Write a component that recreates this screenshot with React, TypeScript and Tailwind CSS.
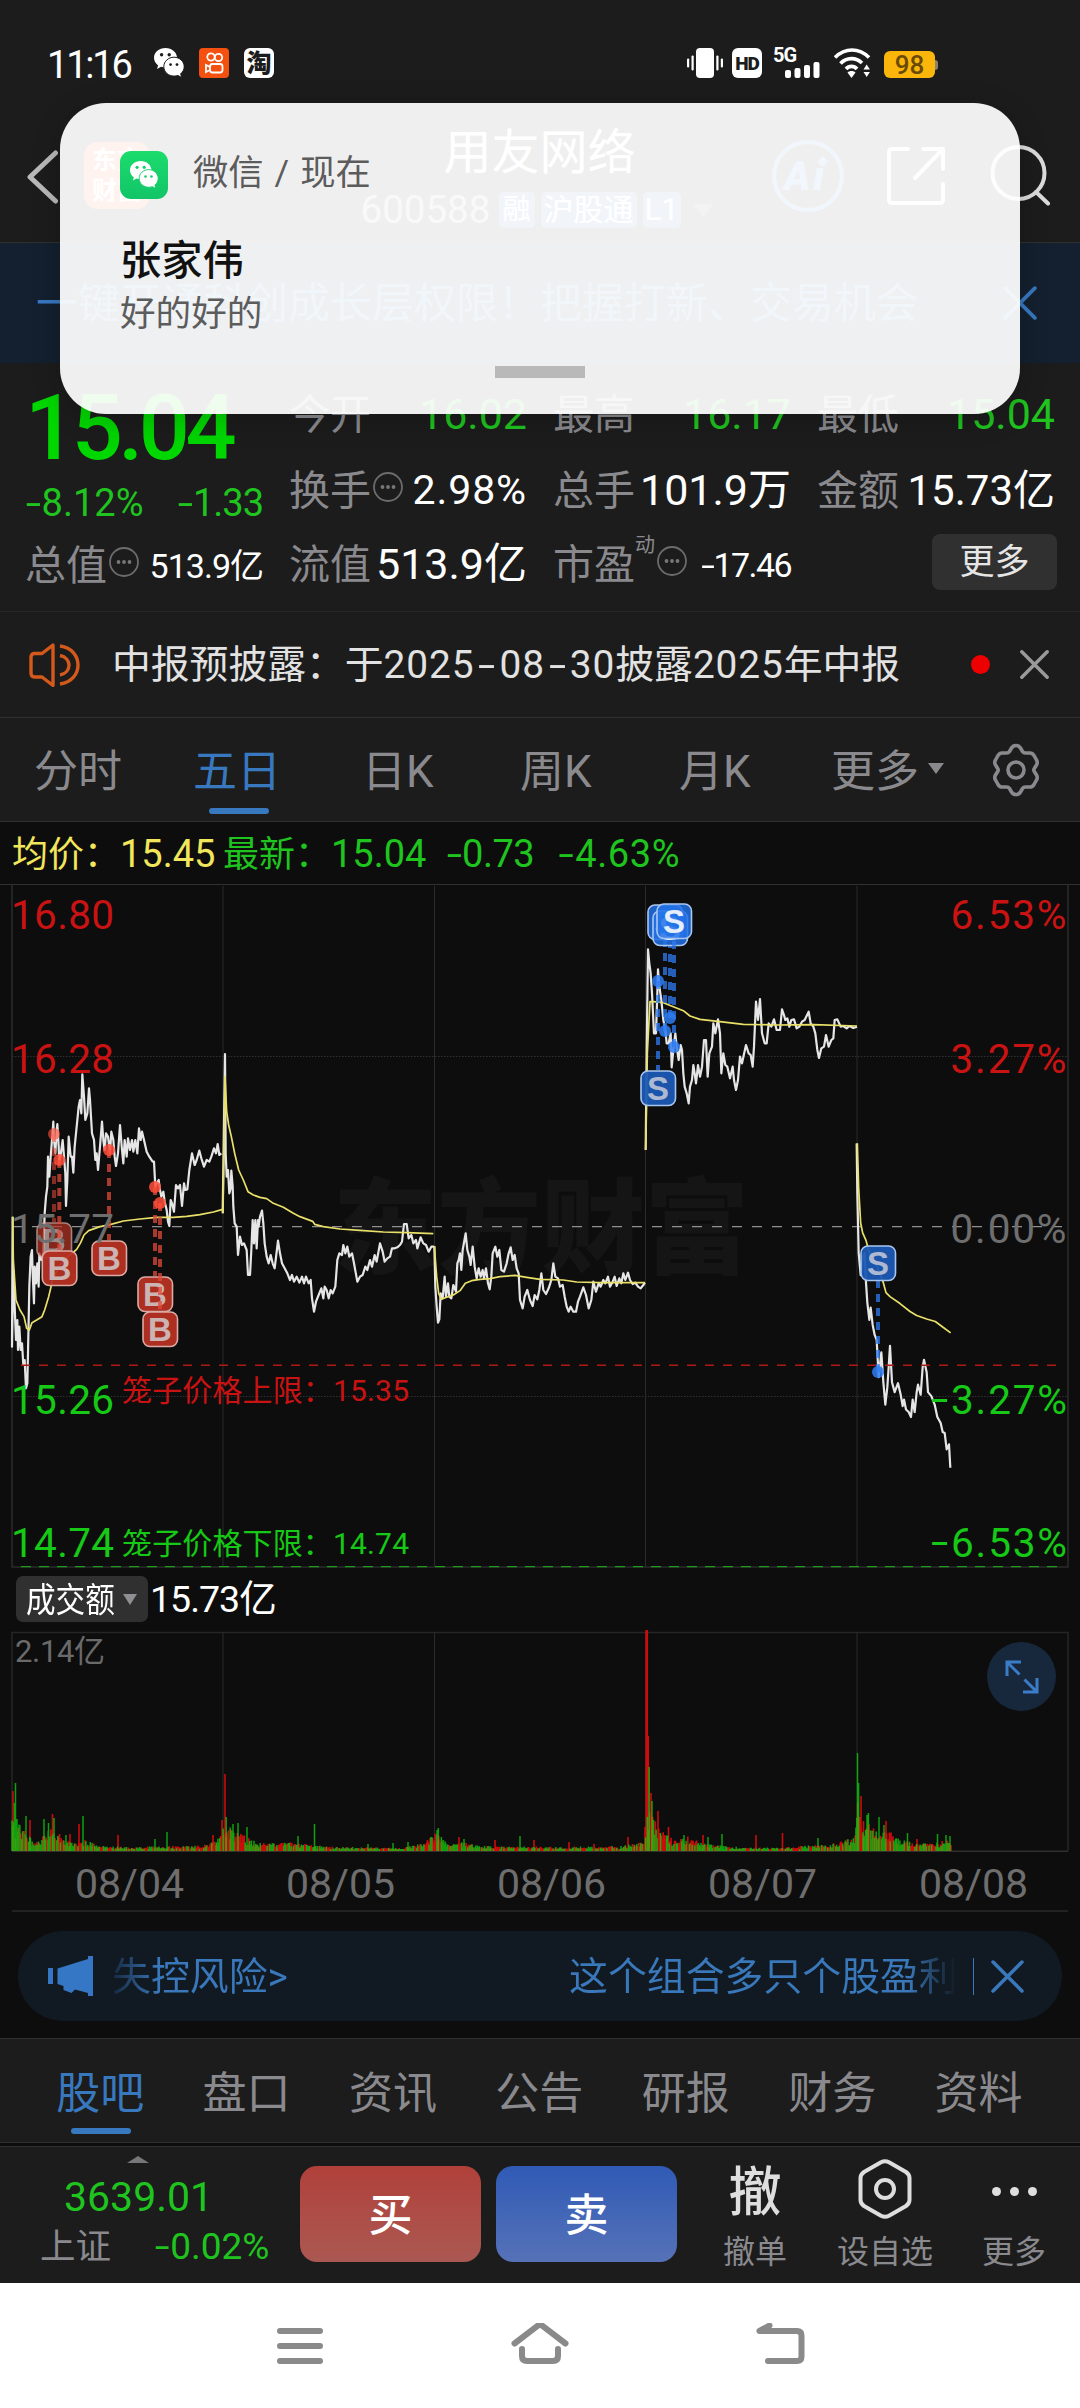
import React from "react";

const FONT = "font-[Roboto,'Noto_Sans_CJK_SC',sans-serif]";

/* ---------- small shared pieces ---------- */

function WeChat({ className, eye }: { className: string; eye: string }) {
  return (
    <svg className={className} viewBox="0 0 30 30" fill="none">
      <path d="M11.5 0C5 0 0 4.4 0 9.8c0 3.1 1.6 5.7 4.1 7.6L3 21l4.1-2.2c1.4.4 2.8.6 4.4.6 6.4 0 11.5-4.3 11.5-9.6S17.900 0 11.500 0Z" fill="#fff" />
      <circle cx="7.600" cy="6.800" r="1.700" fill={eye} />
      <circle cx="15.200" cy="6.800" r="1.700" fill={eye} />
      <path d="M20 9.200c5.600 0 10.200 4.300 10.200 9.500 0 2.900-1.400 5.300-3.500 7.100l.9 3.700-3.600-2c-1.300.4-2.600.6-4 .6-5.600 0-10.200-4.200-10.200-9.400S14.400 9.200 20 9.200Z" fill="#fff" stroke={eye} strokeWidth="1" />
      <circle cx="16.600" cy="16.600" r="1.400" fill={eye} />
      <circle cx="23" cy="16.600" r="1.400" fill={eye} />
    </svg>
  );
}

function Info() {
  return (
    <svg className="-mt-2 h-[30px] w-[30px] shrink-0" viewBox="0 0 30 30" fill="none">
      <circle cx="15" cy="15" r="14" stroke="#6c6c6e" strokeWidth="1.800" />
      <circle cx="9.500" cy="15" r="1.900" fill="#77777a" />
      <circle cx="15" cy="15" r="1.900" fill="#77777a" />
      <circle cx="20.500" cy="15" r="1.900" fill="#77777a" />
    </svg>
  );
}

function Cross({ className, width = 3.5 }: { className: string; width?: number }) {
  return (
    <svg className={className} viewBox="0 0 32 32" fill="none" stroke="currentColor" strokeWidth={width} strokeLinecap="round">
      <path d="M2 2 30 30M30 2 2 30" />
    </svg>
  );
}

/* A number whose minus sign is drawn as a wide dash. */
function Num({ children }: { children: string }) {
  if (children[0] !== "-") return <>{children}</>;
  return (
    <>
      <span className="mx-[0.08em] inline-block scale-x-[1.450]">-</span>
      {children.slice(1)}
    </>
  );
}

function DateDash() {
  return <span className="inline-block w-[25px] scale-x-[1.600] text-center tracking-normal">-</span>;
}

/* ---------- top of the screen ---------- */

function StatusBar() {
  return (
    <div className="flex h-[130px] items-center pl-[47px] text-white">
      <span className="w-[107px] text-[38px] leading-none tracking-[-2.200px]">11:16</span>
      <WeChat className="-mt-1 h-[30px] w-[30px]" eye="#1c1c1c" />
      <svg className="-mt-1 ml-[15px] h-[30px] w-[30px]" viewBox="0 0 30 30" fill="none">
        <rect width="30" height="30" rx="4" fill="#f4500f" />
        <g stroke="#fff" strokeWidth="1.800">
          <circle cx="12" cy="9" r="3.700" />
          <circle cx="19.500" cy="9.500" r="3.700" />
          <rect x="11" y="16" width="12.500" height="8.500" rx="2.500" />
          <path d="m11 19-4-2v7l4-2" />
        </g>
      </svg>
      <div className="-mt-1 ml-[15px] flex h-[30px] w-[30px] items-center justify-center rounded-[6px] bg-white text-[25px] leading-none font-black text-[#1c1c1c]">淘</div>
      <div className="-mt-1 ml-[413px] flex items-center">
        <svg className="h-[30px] w-[36px]" viewBox="0 0 36 30" fill="#fff">
          <rect x="9" y="0" width="18" height="30" rx="4" />
          <rect x="4.500" y="7.500" width="2.200" height="15" rx="1" />
          <rect x="0" y="10.500" width="2.200" height="9" rx="1" />
          <rect x="29.300" y="7.500" width="2.200" height="15" rx="1" />
          <rect x="33.800" y="10.500" width="2.200" height="9" rx="1" />
        </svg>
        <div className="ml-[9px] flex h-[30px] w-[30px] items-center justify-center rounded-[6px] bg-white text-[19px] leading-none font-black tracking-[-1px] text-[#1c1c1c]">HD</div>
        <div className="ml-[11px] flex h-[30px] w-[48px]">
          <span className="text-[20px] leading-[14px] font-bold tracking-[-1px]">5G</span>
          <svg className="-ml-[11px] h-[30px] w-[35px]" viewBox="0 0 35 30" fill="#fff">
            <rect x="0" y="22" width="6" height="8" rx="2" />
            <rect x="9.500" y="20" width="6" height="10" rx="2" />
            <rect x="19" y="17" width="6" height="13" rx="2" />
            <rect x="28.500" y="14" width="6" height="16" rx="2" />
          </svg>
        </div>
        <svg className="ml-[13px] h-[30px] w-[37px]" viewBox="0 0 37 30" fill="none" stroke="#fff" strokeWidth="3.600">
          <path d="M1 9.500C11-.5 25-.5 35 9.500" />
          <path d="M6.500 15.500c6-6.400 15.500-6.400 21.500-.5" />
          <path d="M12 21c3-3.500 8-3.500 11 0" />
          <path d="m13.500 24.500 4 5.500 4-5.500c-2-2-6-2-8 0Z" fill="#fff" stroke="none" />
          <path d="m29.500 21.500 3.200-5 3.200 5zM29.500 24l3.200 5 3.200-5z" fill="#fff" stroke="none" />
        </svg>
        <div className="ml-[13px] mt-[3px] flex h-[27px] w-[51px] items-center justify-center rounded-[6px] bg-[#fab60a] text-[26px] leading-none font-medium text-[#6b4a05]">98</div>
        <div className="mt-[3px] h-[10px] w-[3px] rounded-r bg-[#8c8467]" />
      </div>
    </div>
  );
}

function Header() {
  return (
    <div className="flex h-[113px] items-start border-b border-[#303030] pl-[27px] text-[#cfcfcf]">
      <svg className="mt-[20px] h-[54px] w-[31px] shrink-0" viewBox="0 0 31 54" fill="none" stroke="#b9b9b9" strokeWidth="5" strokeLinecap="round" strokeLinejoin="round">
        <path d="M28.500 3 3 27l25.500 24" />
      </svg>
      <div className="mt-[12px] ml-[26px] grid h-[67px] w-[66px] shrink-0 grid-cols-2 place-items-center rounded-[14px] bg-[#ff4a1c] px-[8px] py-[4px] text-[25px] leading-none font-bold text-white">
        <span>东</span><span>方</span><span>财</span><span>富</span>
      </div>
      <div className="ml-[210px] flex w-[353px] shrink-0 flex-col items-center">
        <span className="-mt-[1px] ml-[6px] text-[48px] leading-[48px] text-white">用友网络</span>
        <div className="mt-[15px] flex h-[36px] items-center">
          <span className="w-[138px] text-[38.500px] leading-none text-[#a0a0a0]">600588</span>
          <span className="w-[36px] rounded-[5px] bg-[#2f6fb5] text-center text-[28px] leading-[36px] text-white">融</span>
          <span className="ml-[6px] w-[96px] rounded-[5px] bg-[#2f6fb5] text-center text-[30px] leading-[36px] text-white">沪股通</span>
          <span className="ml-[6px] w-[38px] rounded-[5px] bg-[#2f6fb5] text-center text-[31px] leading-[36px] text-white">L1</span>
          <span className="ml-[12px] border-x-[10px] border-t-[13px] border-x-transparent border-t-[#505050]" />
        </div>
      </div>
      <svg className="mt-[10px] ml-[59px] h-[72px] w-[72px] shrink-0" viewBox="0 0 72 72" fill="none">
        <circle cx="36" cy="36" r="34" stroke="#3f86e0" strokeWidth="4" />
        <text x="12" y="50" fontSize="40" fontWeight="900" fontStyle="italic" fill="#3f86e0">A</text>
        <text x="41" y="50" fontSize="40" fontWeight="900" fontStyle="italic" fill="#3f86e0">ı</text>
        <path d="m51 16 5 5.500-5 5.500-5.500-5.500z" fill="#3f86e0" />
      </svg>
      <svg className="mt-[17px] ml-[43px] h-[58px] w-[58px] shrink-0" viewBox="0 0 58 58" fill="none" stroke="#e4e4e4" strokeWidth="4" strokeLinecap="round" strokeLinejoin="round">
        <path d="M21 2H5Q2 2 2 5v48q0 3 3 3h48q3 0 3-3V37M36 2h20v20M55 3 28 31" />
      </svg>
      <svg className="mt-[15px] ml-[45px] h-[62px] w-[60px] shrink-0" viewBox="0 0 60 62" fill="none" stroke="#dcdcdc" strokeWidth="4" strokeLinecap="round">
        <circle cx="28.500" cy="28" r="26" />
        <path d="m46 47 12 11.500" />
      </svg>
    </div>
  );
}

function Notification() {
  return (
    <div className="absolute top-[103px] left-[60px] h-[311px] w-[960px] rounded-[46px] bg-white/[0.935] shadow-[0_6px_30px_rgba(0,0,0,0.2)]">
      <div className="flex h-[92px] items-end pl-[60px]">
        <div className="-mb-[4px] flex h-[48px] w-[48px] items-center justify-center rounded-[11px] bg-gradient-to-b from-[#1bdc6c] to-[#12c468]">
          <WeChat className="h-[28px] w-[34px]" eye="#16cf6a" />
        </div>
        <span className="mb-[4px] ml-[25px] text-[35.300px] leading-[35px] text-[#5c5c5c]">微信<span className="mx-[11px]">/</span>现在</span>
      </div>
      <div className="mt-[44px] pl-[60px] text-[41.300px] leading-[44px] font-medium text-[#111]">张家伟</div>
      <div className="mt-[11px] pl-[60px] text-[35.600px] leading-[40px] text-[#5c5c5c]">好的好的</div>
      <div className="mt-[32px] ml-[435px] h-[12px] w-[90px] bg-[#b9b9b9]" />
    </div>
  );
}

function Banner() {
  return (
    <div className="flex h-[120px] items-center bg-[#14202f] pl-[36px] text-[#3878bf]">
      <span className="w-[967px] pt-[2px] text-[42px] leading-none whitespace-nowrap">一键开通科创成长层权限！把握打新、交易机会</span>
      <Cross className="h-[34px] w-[34px]" />
    </div>
  );
}

/* ---------- quote ---------- */

function Cell({ label, value, size, tone = "text-white", extra, h }: { label: string; value: string; size: string; tone?: string; extra?: React.ReactNode; h: string }) {
  return (
    <div className={`flex items-center justify-between whitespace-nowrap ${h}`}>
      <span className="flex items-center pt-[2px] text-[41px] leading-none text-[#8a8a8e]">
        {label}
        {extra}
      </span>
      <span className={`pt-[1px] leading-none ${tone} ${size}`}>
        <Num>{value}</Num>
      </span>
    </div>
  );
}

function Quote() {
  const green = "text-[#1fc41f]";
  return (
    <div className="flex h-[249px] items-start gap-[26px] border-b border-[#262626] pt-[15px] pl-[25px]">
      <div className="w-[238px]">
        <div className="flex h-[102px] items-center text-[90px] leading-none font-medium tracking-[-4.500px] text-[#00d600]">15.04</div>
        <div className="flex h-[46px] items-center justify-between text-[38px] leading-none text-[#1fc41f]">
          <span><Num>-8.12%</Num></span>
          <span className="tracking-[-1px]"><Num>-1.33</Num></span>
        </div>
        <Cell h="h-[78px]" label="总值" value="513.9亿" size="text-[34px] tracking-[-1px]" extra={<span className="ml-[2px]"><Info /></span>} />
      </div>
      <div className="w-[238px]">
        <Cell h="h-[72px]" label="今开" value="16.02" size="text-[43px]" tone={green} />
        <Cell h="h-[80px]" label="换手" value="2.98%" size="text-[41px] tracking-[0.900px]" extra={<span className="ml-[2px]"><Info /></span>} />
        <Cell h="h-[68px]" label="流值" value="513.9亿" size="text-[43px]" />
      </div>
      <div className="w-[238px]">
        <Cell h="h-[72px]" label="最高" value="16.17" size="text-[43px]" tone={green} />
        <Cell h="h-[80px]" label="总手" value="101.9万" size="text-[43px]" />
        <Cell
          h="h-[68px]"
          label="市盈"
          value="-17.46"
          size="text-[34px] tracking-[-1.600px]"
          extra={
            <>
              <span className="-mt-[40px] mr-[2px] text-[20px]">动</span>
              <Info />
            </>
          }
        />
      </div>
      <div className="w-[238px]">
        <Cell h="h-[72px]" label="最低" value="15.04" size="text-[43px]" tone={green} />
        <Cell h="h-[80px]" label="金额" value="15.73亿" size="text-[42px]" />
        <div className="flex h-[68px] items-center justify-end">
          <span className="-mt-[5px] -mr-[2px] h-[56px] w-[125px] rounded-[8px] bg-[#303030] text-center text-[35px] leading-[58px] text-[#e6e6e6]">更多</span>
        </div>
      </div>
    </div>
  );
}

function Notice() {
  return (
    <div className="flex h-[106px] items-center border-b border-[#303030] pl-[29px]">
      <svg className="h-[44px] w-[52px]" viewBox="0 0 52 44" fill="none" stroke="#d4591b" strokeWidth="3.400" strokeLinejoin="round">
        <path d="M24 2 13 10.500H5.500Q2 10.500 2 14v16q0 4 3.500 4H13l11 8.500z" />
        <path d="M31 3c24 3 24 35 0 38M31 12.500c12 2.500 12 17 0 19.500" />
      </svg>
      <span className="ml-[31px] w-[859px] pt-[2px] text-[38.800px] leading-none whitespace-nowrap text-[#e2e2e2]">
        中报预披露：于<span className="tracking-[0.900px]">2025<DateDash />08<DateDash />30</span>披露<span className="tracking-[0.900px]">2025</span>年中报
      </span>
      <span className="h-[19px] w-[19px] rounded-full bg-[#ee0000]" />
      <Cross className="ml-[30px] h-[29px] w-[29px] text-[#9a9a9a]" width={3.800} />
    </div>
  );
}

function PeriodTabs() {
  return (
    <div className="relative flex h-[104px] items-center border-b border-[#303030] pt-[5px] text-[44px] leading-none whitespace-nowrap text-[#8a8a8e]">
      <span className="ml-[34px] w-[159px]">分时</span>
      <span className="w-[169px] text-[#3878bf]">五日</span>
      <span className="w-[158px]">日K</span>
      <span className="w-[159px]">周K</span>
      <span className="w-[152px]">月K</span>
      <span>更多</span>
      <span className="ml-[9px] -mt-[8px] border-x-[8px] border-t-[11px] border-x-transparent border-t-[#8a8a8e]" />
      <svg className="-mt-[5px] ml-[46px] h-[54px] w-[52px]" viewBox="0 0 52 54" fill="none" stroke="#8a8a8e" strokeWidth="3.600" strokeLinejoin="round">
        <path d="M26 2.500q3 0 4.500 2.500l2 3.500q1 1.500 3 1.500h4.500q2.500 0 4 2.500l2.500 4.500q1.500 2.500 0 5l-2.200 3.500q-1 1.500 0 3l2.200 3.500q1.500 2.500 0 5l-2.500 4.500q-1.500 2.500-4 2.500h-4.500q-2 0-3 1.500l-2 3.500q-1.500 2.500-4.500 2.500t-4.500-2.500l-2-3.500q-1-1.500-3-1.500H12q-2.500 0-4-2.500L5.500 37q-1.500-2.500 0-5l2.200-3.500q1-1.500 0-3L5.500 22q-1.500-2.500 0-5L8 12.500q1.500-2.500 4-2.500h4.500q2 0 3-1.500l2-3.500q1.500-2.500 4.500-2.500z" />
        <circle cx="26" cy="27" r="8" />
      </svg>
      <span className="absolute bottom-[7px] left-[209px] h-[6px] w-[60px] rounded-full bg-[#3878bf]" />
    </div>
  );
}

/* ---------- price chart ---------- */

type Line = { d: string; t: string };

const SCALE_A = "translate(0 1120) scale(0.33333)";
const SCALE_B = "translate(400 820) scale(0.33333)";
const SCALE_C = "translate(750 820) scale(0.33333 0.49750)";

const PRICE: Line[] = [
  { t: SCALE_A, d: "38,290 36,680 40,450 44,560 48,660 52,600 54,690 58,620 62,690 66,670 70,735 74,720 78,805 82,790 84,700 88,500 92,410 96,390 98,460 102,550 104,440 108,490 112,430 116,500 118,400 124,420 130,400 134,280 138,230 142,200 144,110 148,170 152,110 156,60 160,5 162,60 166,100 170,30 172,12 176,80 178,130 184,90 188,60 192,110 196,160 198,258 202,180 206,50 212,110 216,110 220,158 224,80 230,20 236,-40 240,-60 244,-20 247,-137 252,-70 256,0 262,-20 267,-95 270,-60 276,40 282,60 286,120 290,100 294,150 300,80 306,5 310,60 314,90 318,40 324,50 330,100 334,35 340,60 344,110 348,138 354,100 360,15 366,90 370,130 374,60 380,110 384,55 390,90 396,60 400,95 406,60 412,100 417,25 422,60 426,35 432,60 440,95 448,110 458,125 462,125 466,200 470,190 476,180 480,210 484,230 490,215 494,245 500,270 504,305 508,318 512,240 516,250 522,275 528,195 534,205 540,195 546,258 552,190 556,210 562,208 568,150 576,100 584,135 590,120 598,92 604,115 612,140 620,120 628,125 634,110 642,85 648,100 653,72 658,105 664,100" },
  { t: SCALE_A, d: "668,280 675,-198 677,100 680,170 684,150 688,220 692,205 694,152 698,200 700,260 704,310 710,320 714,405 720,350 726,375 732,370 740,390 744,465 750,465 754,390 758,300 762,370 766,300 770,385 774,300 776,320 780,290 786,272 790,310 794,370 800,410 806,430 812,405 818,430 824,445 834,362 840,400 846,430 854,445 862,460 870,480 876,465 882,485 890,470 898,488 906,470 912,490 918,470 926,490 932,480 936,535 942,575 948,545 956,525 964,505 970,535 974,500 980,510 986,535 992,510 998,520 1006,500 1012,420 1018,400 1026,405 1030,375 1036,400 1042,380 1048,410 1056,400 1062,430 1072,485 1080,470 1088,465 1096,440 1102,450 1110,420 1116,440 1124,405 1130,425 1140,370 1148,395 1154,425 1162,415 1170,410 1176,385 1184,385 1192,382 1200,375 1206,365 1212,312 1220,312 1226,355 1234,345 1240,370 1248,360 1252,385 1262,352 1270,370 1278,375 1286,395 1294,380 1302,380" },
  { t: SCALE_B, d: "103,1278 106,1400 110,1460 114,1508 118,1498 122,1420 128,1435 134,1370 138,1430 144,1390 148,1430 154,1435 160,1395 168,1415 172,1330 176,1320 180,1300 184,1350 188,1290 197,1240 202,1290 208,1310 212,1335 218,1280 224,1340 230,1375 236,1345 242,1370 248,1350 252,1375 258,1345 264,1390 269,1408 274,1370 278,1300 286,1280 292,1310 298,1290 304,1350 312,1355 320,1330 326,1300 332,1282 338,1320 344,1305 350,1345 356,1360 360,1440 368,1465 374,1430 382,1410 390,1440 398,1458 404,1425 412,1438 418,1410 424,1360 430,1410 438,1422 446,1405 454,1380 460,1330 466,1370 474,1375 480,1400 488,1395 494,1430 500,1460 506,1475 512,1460 520,1475 528,1475 534,1445 540,1430 550,1402 558,1425 566,1465 574,1440 580,1385 588,1415 596,1390 602,1400 610,1380 616,1390 624,1370 630,1400 638,1385 644,1370 650,1398 658,1375 664,1390 670,1360 676,1380 684,1358 690,1380 698,1392 706,1388 714,1400 722,1405 730,1395 735,1388" },
  { t: SCALE_B, d: "737,990 740,700 744,388 748,430 752,460 756,520 762,640 768,640 772,520 774,448 778,500 784,540 790,600 796,630 800,670 806,670 812,640 815,742 820,690 826,640 830,680 836,720 842,675 846,690 850,760 854,800 860,820 866,850 870,800 876,780 880,735 884,760 888,790 894,735 900,770 906,740 912,660 918,660 923,770 928,700 936,680 940,610 946,640 954,598 960,640 964,760 970,700 976,735 982,740 990,775 998,740 1002,780 1008,810 1014,780 1020,710 1026,730 1038,675 1046,700 1052,705 1058,740 1062,680 1068,545 1074,600 1080,537 1086,640 1094,670 1100,670 1106,610 1114,620 1122,598 1130,630 1140,630 1146,568 1152,585 1156,600 1162,595 1168,620 1174,600 1182,598 1190,625 1198,620 1206,605 1214,600 1226,575 1232,610 1240,620 1246,640 1252,690 1257,714 1264,685 1272,680 1278,645 1286,680 1294,660 1300,655 1304,600 1312,598 1322,620 1330,618 1340,625 1348,618 1360,624 1371,620" },
  { t: SCALE_C, d: "320,650 322,750 326,870 332,915 338,880 344,870 348,930 352,970 358,1005 362,980 368,1015 374,1035 380,1045 386,1120 394,1070 400,1130 406,1175 412,1140 416,1100 420,1057 426,1130 434,1150 444,1132 452,1155 458,1178 462,1165 468,1185 476,1190 483,1200 488,1165 494,1190 500,1150 504,1135 512,1155 518,1100 522,1085 530,1110 534,1150 544,1158 554,1175 562,1200 572,1212 578,1230 584,1232 590,1265 597,1255 601,1302" },
];

const AVERAGE: Line[] = [
  { t: SCALE_A, d: "38,290 40,420 48,540 60,570 72,590 80,625 88,630 96,608 110,600 126,590 134,570 146,530 158,480 176,440 194,420 210,405 230,388 242,368 252,345 266,332 300,320 330,314 370,303 420,297 470,292 520,292 560,289 600,284 640,276 668,268" },
  { t: SCALE_A, d: "669,280 675,-130 680,-25 686,15 694,50 704,100 716,150 730,180 744,215 760,225 780,232 800,236 820,250 850,262 880,280 900,290 938,304 944,313 970,320 1020,327 1080,331 1150,336 1220,338 1300,341" },
  { t: SCALE_B, d: "103,1278 110,1370 116,1420 124,1438 140,1432 160,1425 180,1412 196,1390 215,1382 240,1378 270,1376 300,1370 345,1366 380,1372 420,1378 490,1380 530,1386 600,1388 735,1388" },
  { t: SCALE_B, d: "737,990 742,700 750,545 760,545 790,548 820,560 850,572 870,588 900,598 960,605 1030,613 1130,615 1240,614 1371,618" },
  { t: SCALE_C, d: "322,650 326,740 332,810 338,830 348,845 356,865 370,885 380,895 400,930 408,950 420,958 450,972 480,988 500,996 530,1003 556,1008 580,1020 602,1031" },
];

const DAYS = [223, 434.500, 645.500, 857];

type Mark = { x: number; dot: number; box: number; faded?: boolean };

const BUYS: Mark[] = [
  { x: 54, dot: 1134, box: 1240, faded: true },
  { x: 59.300, dot: 1160, box: 1268 },
  { x: 109, dot: 1150, box: 1258 },
  { x: 155, dot: 1187, box: 1294 },
  { x: 160, dot: 1203, box: 1329 },
];

const SELLS: Mark[] = [
  { x: 665, dot: 1031, box: 922 },
  { x: 670, dot: 1018, box: 928 },
  { x: 674, dot: 1047, box: 921 },
  { x: 658, dot: 981, box: 1088 },
  { x: 878, dot: 1372, box: 1263 },
];

function Marker({ m, letter }: { m: Mark; letter: "B" | "S" }) {
  const buy = letter === "B";
  const bright = !buy && m.box < 1000;
  return (
    <g opacity={m.faded ? 0.75 : 1}>
      <line x1={m.x} x2={m.x} y1={m.dot} y2={m.box < m.dot ? m.box + 18 : m.box - 18} stroke={buy ? "#e04a38" : "#2f7bf0"} strokeOpacity="0.75" strokeWidth="4" strokeDasharray="8 6" />
      <circle cx={m.x} cy={m.dot} r="6" fill={buy ? "#ff4d3a" : "#2e7df5"} fillOpacity="0.85" />
      <rect x={m.x - 17} y={m.box - 17} width="34.500" height="34.500" rx="7" fill={buy ? "#b53224" : bright ? "#2272e8" : "#1c5ab4"} fillOpacity={bright ? 0.85 : 0.95} stroke={buy ? "#dcaaa4" : "#a9c6f0"} strokeWidth="1.600" />
      <text x={m.x} y={m.box + 11.500} textAnchor="middle" fontSize="33" fontWeight="700" fill={buy ? "#ccb4b2" : bright ? "#e4eeff" : "#adb9d2"} className="font-['Liberation_Sans',sans-serif]">
        {letter}
      </text>
    </g>
  );
}

function PriceChart() {
  const left: [string, number, string][] = [
    ["16.80", 929, "#c91313"],
    ["16.28", 1073, "#c91313"],
    ["15.77", 1243, "#6e6e6e"],
    ["15.26", 1414, "#16c916"],
    ["14.74", 1557, "#16c916"],
  ];
  const right: [string, number, string][] = [
    ["6.53%", 929, "#c91313"],
    ["3.27%", 1073, "#c91313"],
    ["0.00%", 1243, "#6e6e6e"],
    ["-3.27%", 1414, "#16c916"],
    ["-6.53%", 1557, "#16c916"],
  ];
  return (
    <svg className="block h-[683px] w-[1080px]" viewBox="0 885 1080 683" fill="none">
      <text x="333" y="1266" fontSize="104" fontWeight="900" fill="#151515">东方财富</text>
      <g stroke="#2b2b2b">
        <path d="M12 885V1567H1068V885" strokeWidth="1.600" />
        {DAYS.map((x) => (
          <line key={x} x1={x} x2={x} y1="886" y2="1567" />
        ))}
        <path d="M12 1056.500H1068M12 1396.500H1068" stroke="#303030" strokeDasharray="1.500 1.500" />
      </g>
      <path d="M12 1226.700H1062" stroke="#8f8f8f" strokeWidth="1.300" strokeDasharray="10 10" />
      {PRICE.map((l, i) => (
        <polyline key={i} points={l.d} transform={l.t} stroke="#e6e6e6" strokeWidth="2.200" vectorEffect="non-scaling-stroke" strokeLinejoin="round" />
      ))}
      {AVERAGE.map((l, i) => (
        <polyline key={i} points={l.d} transform={l.t} stroke="#e9e06a" strokeWidth="1.700" vectorEffect="non-scaling-stroke" strokeLinejoin="round" />
      ))}
      <path d="M21 1365.300H1058" stroke="#b01818" strokeWidth="1.400" strokeDasharray="9 9" />
      <path d="M21 1566.600H1058" stroke="#1f9a1f" strokeWidth="1.400" strokeDasharray="10 8" />
      {BUYS.map((m) => <Marker key={m.x} m={m} letter="B" />)}
      {SELLS.map((m) => <Marker key={m.x} m={m} letter="S" />)}
      {left.map(([t, y, c]) => (
        <text key={t} x="11" y={y} fontSize="40.500" fill={c} textLength="103">{t}</text>
      ))}
      {right.map(([t, y, c]) => (
        <text key={t} x={t[0] === "-" ? 951 : 950.500} y={y} fontSize="40.500" fill={c} textLength="116">{t.replace("-", "")}</text>
      ))}
      {right.slice(3).map(([t, y, c]) => (
        <text key={t} transform={`translate(931 ${y - 1}) scale(1.55 1)`} fontSize="40.500" fill={c}>-</text>
      ))}
      <text x="122" y="1401" fontSize="30" fill="#c91313" textLength="287">笼子价格上限：15.35</text>
      <text x="122" y="1554" fontSize="30" fill="#16c916" textLength="287">笼子价格下限：14.74</text>
    </svg>
  );
}

function ChartLegend() {
  return (
    <div className="flex h-[63px] items-center border-b border-[#303030] pt-[2px] pl-[12px] text-[38px] leading-none whitespace-pre">
      <span className="w-[211px] text-[#f2e65c]"><span className="text-[36px]">均价：</span>15.45</span>
      <span className="w-[223px] text-[#1fc41f]"><span className="text-[36px]">最新：</span>15.04</span>
      <span className="w-[112px] tracking-[-0.500px] text-[#1fc41f]"><Num>-0.73</Num></span>
      <span className="tracking-[0.600px] text-[#1fc41f]"><Num>-4.63%</Num></span>
    </div>
  );
}

/* ---------- volume ---------- */

const ENVELOPE: [number, number][] = [
  [12, 30], [17, 26], [25, 22], [33, 8], [40, 9], [45, 20], [55, 22], [65, 10], [75, 8], [85, 10], [100, 5], [130, 3.500], [165, 4.500], [200, 5], [215, 9], [223, 26],
  [228, 24], [240, 17], [252, 10], [262, 7], [290, 8], [310, 6], [330, 4], [400, 3], [420, 7], [433, 14],
  [437, 18], [446, 8], [465, 8], [480, 5], [500, 4], [560, 4], [620, 4.500], [644, 9],
  [649, 50], [655, 30], [665, 16], [675, 10], [690, 14], [702, 7], [730, 4], [780, 3], [805, 5], [830, 6], [855, 14],
  [858, 60], [862, 30], [870, 26], [878, 16], [888, 20], [900, 10], [925, 7], [938, 8], [951, 12],
];

const SPIKES: [number, number, "r" | "g"][] = [
  [13, 60, "r"], [14.500, 48, "g"], [15.500, 68, "g"], [17, 32, "g"], [26, 35, "g"], [30, 31, "r"], [44, 32, "g"], [48.500, 28, "g"], [52.500, 37, "r"], [54, 33, "g"], [66, 16, "g"], [70, 17, "r"], [79, 27, "r"], [83, 35, "g"], [118, 16, "r"], [155, 12, "g"], [167, 19, "g"], [213, 16, "r"],
  [222, 31, "r"], [225, 77, "r"], [226.200, 34, "g"], [233, 27, "g"], [238, 28, "g"], [247, 24, "g"], [298, 15, "g"], [314.500, 27, "g"], [368, 7, "g"], [393, 8, "g"], [408, 9, "g"],
  [437, 21, "g"], [438.300, 23, "g"], [459, 14, "r"], [464, 12, "g"], [495, 11, "r"], [520, 15, "g"], [534, 11, "r"], [569, 9, "r"], [594, 7, "r"], [628, 14, "r"],
  [645, 24, "r"], [646.200, 222, "r"], [647.300, 222, "r"], [648.300, 115, "r"], [649.200, 84, "g"], [651, 58, "r"], [652, 50, "g"], [658, 40, "r"], [668.500, 24, "r"], [684, 16, "g"], [703, 16, "r"], [708, 14, "g"], [722, 17, "g"], [756, 16, "r"], [782.500, 18, "r"], [818, 13, "g"],
  [857.500, 98, "g"], [858.600, 68, "g"], [861, 55, "r"], [863.500, 30, "r"], [867, 36, "g"], [868.400, 38, "g"], [879, 34, "g"], [884, 26, "g"], [886, 30, "r"], [907.500, 18, "g"], [917, 12, "r"], [937.500, 17, "g"], [946, 16, "g"], [950, 15, "g"],
];

function envelope(x: number) {
  for (let i = 1; i < ENVELOPE.length; i++) {
    const [x0, y0] = ENVELOPE[i - 1];
    const [x1, y1] = ENVELOPE[i];
    if (x <= x1) return y0 + ((y1 - y0) * (x - x0)) / (x1 - x0);
  }
  return 0;
}

function volumePaths() {
  let seed = 20250808;
  const rand = () => {
    seed = (seed * 1103515245 + 12345) % 2147483648;
    return seed / 2147483648;
  };
  let red = "";
  let green = "";
  for (let x = 12; x < 951.500; x += 0.880) {
    const h = Math.max(2, envelope(x) * (0.450 + rand() * 0.650));
    const seg = `M${x.toFixed(1)} 1851v-${h.toFixed(1)}`;
    if (rand() < 0.500) red += seg;
    else green += seg;
  }
  for (const [x, h, c] of SPIKES) {
    const seg = `M${x} 1851v-${h}`;
    if (c === "r") red += seg;
    else green += seg;
  }
  return { red, green };
}

function VolumeChart() {
  const { red, green } = volumePaths();
  return (
    <div className="relative">
      <svg className="block h-[222px] w-[1080px]" viewBox="0 1630 1080 222" fill="none">
        <path d="M12 1851V1632.500H1068V1851.200" stroke="#262626" strokeWidth="1.500" />
        <path d="M12 1851.200H1068" stroke="#303030" strokeWidth="1.500" />
        {DAYS.map((x) => (
          <line key={x} x1={x} x2={x} y1="1632" y2="1851" stroke="#2b2b2b" />
        ))}
        <path d={red} stroke="#e00c0c" strokeOpacity="0.900" strokeWidth="1.600" />
        <path d={green} stroke="#10d010" strokeOpacity="0.750" strokeWidth="1.500" />
        <text x="15" y="1662" fontSize="31" fill="#6a6a6a" textLength="90">2.14亿</text>
      </svg>
      <div className="absolute top-[12px] left-[987px] flex h-[69px] w-[69px] items-center justify-center rounded-full bg-[#17283d]">
        <svg className="h-[34px] w-[34px]" viewBox="0 0 34 34" fill="none" stroke="#3a7cc8" strokeWidth="3">
          <path d="M16 2H2v14M2.500 2.500 14.500 14.500M32 18v14H18M31.500 31.500 19.500 19.500" />
        </svg>
      </div>
    </div>
  );
}

function Volume() {
  return (
    <>
      <div className="flex h-[62px] items-center pl-[16px] text-white">
        <div className="flex h-[46px] w-[132px] items-center rounded-[7px] bg-[#303030] pl-[10px]">
          <span className="w-[97px] origin-left scale-x-[0.870] pt-[2px] text-[34px] leading-none whitespace-nowrap">成交额</span>
          <span className="border-x-[7px] border-t-[11px] border-x-transparent border-t-[#8f8f93]" />
        </div>
        <span className="ml-[2px] pt-[1px] text-[37.500px] leading-none tracking-[-1px]">15.73亿</span>
      </div>
      <VolumeChart />
      <div className="mx-[12px] flex h-[60px] items-center border-b-2 border-[#222] pt-[7px] pl-[12px] text-[41px] leading-none text-[#6e6e6e]">
        {["08/04", "08/05", "08/06", "08/07", "08/08"].map((d) => (
          <span key={d} className="w-[211px] shrink-0 text-center">{d}</span>
        ))}
      </div>
    </>
  );
}

/* ---------- bottom ---------- */

function Ticker() {
  return (
    <div className="mx-[18px] mt-[19px] flex h-[90px] items-center rounded-full bg-[#111a22] pl-[30px] text-[38.900px] leading-none whitespace-nowrap text-[#3a78bc]">
      <svg className="h-[40px] w-[46px]" viewBox="0 0 46 40" fill="#3577c4">
        <path d="M0 12h5v16H0zM9.500 12.500 40 3V0h5v40h-5v-3L27 33.500 23.500 37l-8-3v-4L9.500 28z" />
      </svg>
      <span className="ml-[18px] w-[457px] bg-gradient-to-r from-[#16293f] via-[#3a78bc] via-[10%] to-[#3a78bc] bg-clip-text pt-[7px] pb-[5px] text-transparent">失控风险&gt;</span>
      <span className="w-[404px] bg-gradient-to-r from-[#3a78bc] via-[#3a78bc] via-[84%] to-[#111a22] to-[96%] bg-clip-text pt-[7px] pb-[5px] text-transparent">这个组合多只个股盈利</span>
      <span className="h-[37px] w-px bg-[#3a78bc]" />
      <Cross className="ml-[17px] h-[33px] w-[33px]" />
    </div>
  );
}

function InfoTabs() {
  return (
    <div className="mt-[17px] flex h-[105px] items-center border-y border-[#303030] bg-[#1c1c1c] pt-[6px] pl-[27px] text-[44px] leading-none text-[#8a8a8e]">
      {["股吧", "盘口", "资讯", "公告", "研报", "财务", "资料"].map((t, i) => (
        <span key={t} className={i === 0 ? "relative w-[146.400px] text-center text-[#3878bf]" : "w-[146.400px] text-center"}>
          {t}
          {i === 0 && <span className="absolute -bottom-[18px] left-[44px] h-[6px] w-[60px] rounded-full bg-[#3878bf]" />}
        </span>
      ))}
    </div>
  );
}

function TradeBar() {
  return (
    <div className="mt-[3px] flex h-[137px] items-start border-t border-[#303030] bg-[#1c1c1c] whitespace-nowrap">
      <div className="w-[300px] leading-none text-[#1fc41f]">
        <div className="mt-[9px] ml-[127px] w-0 border-x-[11px] border-b-[7px] border-x-transparent border-b-[#77777a]" />
        <div className="mt-[12px] ml-[64px] text-[41px] leading-[44px]">3639.01</div>
        <div className="mt-[10px] ml-[40px] flex items-center text-[37px] leading-[36px]">
          <span className="w-[114px] text-[35.500px] text-[#8a8a8e]">上证</span>
          <span><Num>-0.02%</Num></span>
        </div>
      </div>
      <div className="mt-[19px] h-[96px] w-[181px] rounded-[17px] bg-gradient-to-b from-[#b0403a] to-[#ab5852] text-center text-[44px] leading-[100px] font-medium text-white">买</div>
      <div className="mt-[19px] ml-[15px] h-[96px] w-[181px] rounded-[17px] bg-gradient-to-b from-[#2f5ab5] to-[#5672b8] text-center text-[44px] leading-[100px] font-medium text-white">卖</div>
      <div className="ml-[28px] flex w-[100px] flex-col items-center text-[32px] leading-none text-[#8a8a8e]">
        <span className="mt-[20px] text-[53px] leading-[53px] font-medium text-[#dedede]">撤</span>
        <span className="mt-[16px]">撤单</span>
      </div>
      <div className="ml-[30px] flex w-[100px] flex-col items-center text-[32px] leading-none text-[#8a8a8e]">
        <svg className="mt-[12px] h-[60px] w-[54px]" viewBox="0 0 54 60" fill="none" stroke="#dedede" strokeWidth="4" strokeLinejoin="round">
          <path d="M23 3.200q4-2 8 0L48 13q3.500 2.500 3.500 6v22q0 3.500-3.500 6L31 56.800q-4 2-8 0L6 47q-3.500-2.500-3.500-6V19q0-3.500 3.500-6z" />
          <circle cx="27" cy="30" r="9" />
        </svg>
        <span className="mt-[17px]">设自选</span>
      </div>
      <div className="ml-[29px] flex w-[100px] flex-col items-center text-[32px] leading-none text-[#8a8a8e]">
        <div className="mt-[40px] flex gap-[9px]">
          <span className="h-[9px] w-[9px] rounded-full bg-[#dedede]" />
          <span className="h-[9px] w-[9px] rounded-full bg-[#dedede]" />
          <span className="h-[9px] w-[9px] rounded-full bg-[#dedede]" />
        </div>
        <span className="mt-[40px]">更多</span>
      </div>
    </div>
  );
}

function NavBar() {
  return (
    <div className="flex h-[126px] items-center bg-white pl-[277px]">
      <svg className="h-[46px] w-[46px]" viewBox="0 0 46 46" stroke="#8a8a8a" strokeWidth="6" strokeLinecap="round">
        <path d="M3 8h40M3 23h40M3 38h40" />
      </svg>
      <svg className="ml-[187px] h-[46px] w-[60px]" viewBox="0 0 60 46" fill="none" stroke="#8a8a8a" strokeWidth="6" strokeLinecap="round" strokeLinejoin="round">
        <path d="M4.500 20.500 27.500 2.800q2.500-1.800 5 0L55.500 20.500M12 26v7q0 5 5 5h26q5 0 5-5v-7" />
      </svg>
      <svg className="ml-[186px] h-[46px] w-[50px]" viewBox="0 0 50 46" fill="none" stroke="#8a8a8a" strokeWidth="6" strokeLinecap="round" strokeLinejoin="round">
        <path d="M13.500 2.500 3.500 8H41q4.500 0 4.500 4.500v21q0 4.500-4.500 4.500H12" />
      </svg>
    </div>
  );
}

export default function App() {
  return (
    <div className={`relative h-[2408px] w-[1080px] overflow-hidden bg-[#0d0d0d] ${FONT}`}>
      <div className="bg-[#1c1c1c]">
        <StatusBar />
        <Header />
        <Banner />
        <Quote />
        <Notice />
        <PeriodTabs />
      </div>
      <ChartLegend />
      <PriceChart />
      <Volume />
      <Ticker />
      <InfoTabs />
      <TradeBar />
      <NavBar />
      <Notification />
    </div>
  );
}
